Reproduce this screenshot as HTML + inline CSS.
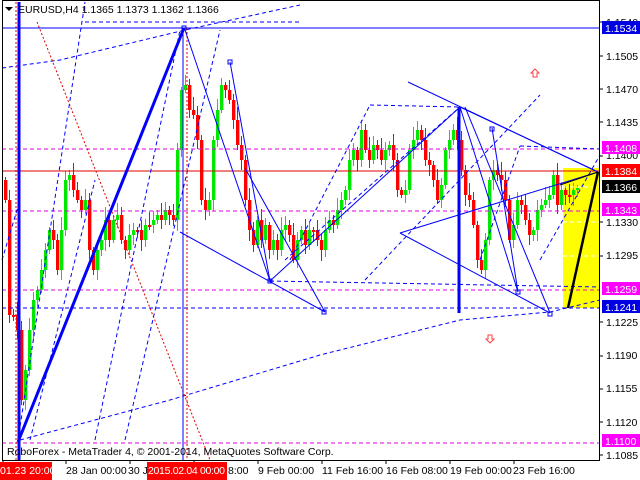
<!DOCTYPE html>
<html><head><meta charset="utf-8"><style>
html,body{margin:0;padding:0;background:#fff;width:640px;height:480px;overflow:hidden}
svg{display:block}
text{font-family:"Liberation Sans",sans-serif;font-size:10.5px}
</style></head><body>
<svg id="s" width="640" height="480" xmlns="http://www.w3.org/2000/svg">
<rect width="640" height="480" fill="#fff"/>
<rect x="563" y="168" width="36" height="140" fill="#ffff00"/>
<g id="c"></g>
<line x1="2" y1="28" x2="600" y2="28" stroke="#0000ff" stroke-width="1"/>
<line x1="2" y1="171" x2="600" y2="171" stroke="#e00000" stroke-width="1"/>
<g stroke="#e000e0" stroke-dasharray="4,3" stroke-width="1">
<line x1="2" y1="149" x2="600" y2="149"/><line x1="2" y1="211" x2="600" y2="211"/>
<line x1="2" y1="290" x2="600" y2="290"/><line x1="2" y1="443" x2="600" y2="443"/></g>
<g stroke="#fff" stroke-dasharray="4,3"><line x1="563" y1="187" x2="600" y2="187"/><line x1="563" y1="222" x2="600" y2="222"/><line x1="563" y1="256" x2="600" y2="256"/></g>
<g stroke="#0000ff" stroke-dasharray="4,3" stroke-width="1" fill="none">
<line x1="2" y1="308" x2="600" y2="308"/>
<line x1="270" y1="281" x2="600" y2="287"/>
<line x1="85" y1="22" x2="300" y2="22"/>
<polyline points="2,68 60,60 185,30 300,5"/>
<polyline points="20,440 170,400 320,355 460,320 550,312 600,300"/>
<line x1="18" y1="440" x2="85" y2="2"/>
<line x1="30" y1="440" x2="95" y2="180"/>
<line x1="95" y1="440" x2="180" y2="30"/>
<line x1="125" y1="440" x2="220" y2="30"/>
<line x1="290" y1="260" x2="370" y2="105"/><line x1="370" y1="105" x2="460" y2="107"/>
<line x1="285" y1="260" x2="460" y2="107"/>
<line x1="365" y1="280" x2="540" y2="95"/>
<line x1="480" y1="260" x2="520" y2="146"/><line x1="520" y1="146" x2="600" y2="149"/>
<line x1="540" y1="260" x2="600" y2="155"/>
<line x1="2" y1="260" x2="20" y2="200"/>
</g>
<g stroke="#e00000" stroke-dasharray="2,2" fill="none">
<line x1="37" y1="22" x2="210" y2="460"/>
<line x1="16" y1="2" x2="16" y2="460"/>
<line x1="187" y1="28" x2="187" y2="460"/>
</g>
<g stroke="#0000ff" fill="none">
<line x1="19" y1="2" x2="19" y2="460" stroke-width="3"/>
<line x1="18" y1="442" x2="184" y2="28" stroke-width="3"/>
<line x1="183" y1="28" x2="183" y2="460"/>
<line x1="185" y1="30" x2="270" y2="281"/>
<line x1="230" y1="62" x2="270" y2="281"/>
<line x1="245" y1="168" x2="325" y2="312"/>
<line x1="180" y1="232" x2="325" y2="312"/>
<line x1="270" y1="281" x2="460" y2="107"/>
<line x1="408" y1="82" x2="598" y2="172"/>
<line x1="460" y1="107" x2="598" y2="172"/>
<line x1="400" y1="233" x2="598" y2="172"/>
<line x1="400" y1="233" x2="550" y2="313"/>
<line x1="460" y1="107" x2="518" y2="292"/>
<line x1="492" y1="128" x2="518" y2="292"/>
<line x1="465" y1="107" x2="550" y2="313"/>
<line x1="459" y1="107" x2="459" y2="313" stroke-width="3"/>
<rect x="228" y="60" width="4" height="4"/><rect x="490" y="127" width="4" height="4"/>
<rect x="516" y="290" width="4" height="4"/><rect x="548" y="312" width="4" height="4"/>
<rect x="322" y="310" width="4" height="4"/><rect x="268" y="279" width="4" height="4"/>
<rect x="182" y="26" width="4" height="4"/>
</g>
<line x1="568" y1="308" x2="598" y2="172" stroke="#000" stroke-width="2.5"/>
<line x1="560" y1="185" x2="598" y2="172" stroke="#000" stroke-width="1"/>
<path d="M535 69 L531 73 L533 73 L533 77 L537 77 L537 73 L539 73 Z" fill="#fff" stroke="#ff4040"/>
<path d="M490 343 L486 339 L488 339 L488 335 L492 335 L492 339 L494 339 Z" fill="#fff" stroke="#ff4040"/>
<rect x="2.5" y="0.5" width="597" height="460" fill="none" stroke="#000"/>
<g stroke="#000"><line x1="600" y1="22" x2="603" y2="22"/><line x1="600" y1="56" x2="603" y2="56"/><line x1="600" y1="89" x2="603" y2="89"/><line x1="600" y1="122" x2="603" y2="122"/><line x1="600" y1="156" x2="603" y2="156"/><line x1="600" y1="222" x2="603" y2="222"/><line x1="600" y1="256" x2="603" y2="256"/><line x1="600" y1="322" x2="603" y2="322"/><line x1="600" y1="356" x2="603" y2="356"/><line x1="600" y1="389" x2="603" y2="389"/><line x1="600" y1="422" x2="603" y2="422"/><line x1="600" y1="455" x2="603" y2="455"/></g>
<g fill="#000"><text x="606" y="26">1.1540</text><text x="606" y="60">1.1505</text><text x="606" y="93">1.1470</text><text x="606" y="126">1.1435</text><text x="606" y="159">1.1400</text><text x="606" y="226">1.1330</text><text x="606" y="259">1.1295</text><text x="606" y="326">1.1225</text><text x="606" y="359">1.1190</text><text x="606" y="392">1.1155</text><text x="606" y="426">1.1120</text><text x="606" y="459">1.1085</text></g>
<rect x="602" y="21" width="38" height="13" fill="#0000e0"/><text x="605" y="32" fill="#fff">1.1534</text>
<rect x="602" y="141" width="38" height="13" fill="#ff00ff"/><text x="605" y="152" fill="#fff">1.1408</text>
<rect x="602" y="164" width="38" height="13" fill="#ff0000"/><text x="605" y="175" fill="#fff">1.1384</text>
<rect x="602" y="180" width="38" height="13" fill="#000"/><text x="605" y="191" fill="#fff">1.1366</text>
<rect x="602" y="203" width="38" height="13" fill="#ff00ff"/><text x="605" y="214" fill="#fff">1.1343</text>
<rect x="602" y="282" width="38" height="13" fill="#ff00ff"/><text x="605" y="293" fill="#fff">1.1259</text>
<rect x="602" y="300" width="38" height="13" fill="#0000e0"/><text x="605" y="311" fill="#fff">1.1241</text>
<rect x="602" y="434" width="38" height="13" fill="#ff00ff"/><text x="605" y="445" fill="#fff">1.1100</text>
<g stroke="#000"><line x1="3" y1="460" x2="3" y2="464"/><line x1="66" y1="460" x2="66" y2="464"/><line x1="130" y1="460" x2="130" y2="464"/><line x1="194" y1="460" x2="194" y2="464"/><line x1="258" y1="460" x2="258" y2="464"/><line x1="322" y1="460" x2="322" y2="464"/><line x1="386" y1="460" x2="386" y2="464"/><line x1="450" y1="460" x2="450" y2="464"/><line x1="514" y1="460" x2="514" y2="464"/></g>
<g fill="#000"><text x="66" y="474">28 Jan 00:00</text><text x="128" y="474">30 J</text><text x="228" y="474">8:00</text><text x="258" y="474">9 Feb 00:00</text><text x="322" y="474">11 Feb 16:00</text><text x="386" y="474">16 Feb 08:00</text><text x="450" y="474">19 Feb 00:00</text><text x="513" y="474">23 Feb 16:00</text></g>
<rect x="0" y="462" width="52" height="18" fill="#ff0000"/><text x="0" y="474" fill="#fff">01.23 20:00</text>
<rect x="147" y="462" width="80" height="18" fill="#ff0000"/><text x="148" y="474" fill="#fff" textLength="77">2015.02.04 00:00</text>
<text x="7" y="455" fill="#000">RoboForex - MetaTrader 4, © 2001-2014, MetaQuotes Software Corp.</text>
<path d="M5 7 L13 7 L9 11 Z" fill="#000"/>
<text x="18" y="13" fill="#000">EURUSD,H4  1.1365 1.1373 1.1362 1.1366</text>
</svg>
<script>
var p=[200,315,315,330,400,370,330,300,290,270,250,230,240,270,230,180,175,190,200,210,200,250,270,250,240,220,240,220,215,240,250,235,230,230,240,225,225,220,215,220,210,215,220,150,90,85,110,115,140,200,210,200,140,110,85,90,100,120,145,160,200,230,245,220,240,225,250,240,250,230,225,235,260,240,230,245,230,230,240,250,230,220,225,210,200,190,160,150,160,130,150,160,145,150,160,150,145,160,190,195,190,150,140,130,140,160,165,180,200,185,150,140,130,140,170,195,200,225,260,270,240,180,170,175,180,200,240,225,200,205,220,235,230,210,205,200,195,175,205,190,195,195,190,188];
var g=document.getElementById('c'),h='',prev=p[0]-20;
for(var i=0;i<p.length;i++){var x=4+i*4,o=prev,c=p[i];if(Math.abs(o-c)<2)c=o+2;
var t=Math.min(o,c),b=Math.max(o,c),w1=3+(i*7%11),w2=3+(i*5%9);
var col=c<o?'#00e800':'#ff0000';
h+='<line x1="'+(x+1.5)+'" y1="'+(t-w1)+'" x2="'+(x+1.5)+'" y2="'+(b+w2)+'" stroke="'+col+'"/>';
h+='<rect x="'+x+'" y="'+t+'" width="3.4" height="'+(b-t)+'" fill="'+col+'"/>';prev=p[i];}
g.innerHTML=h;
</script>
</body></html>
